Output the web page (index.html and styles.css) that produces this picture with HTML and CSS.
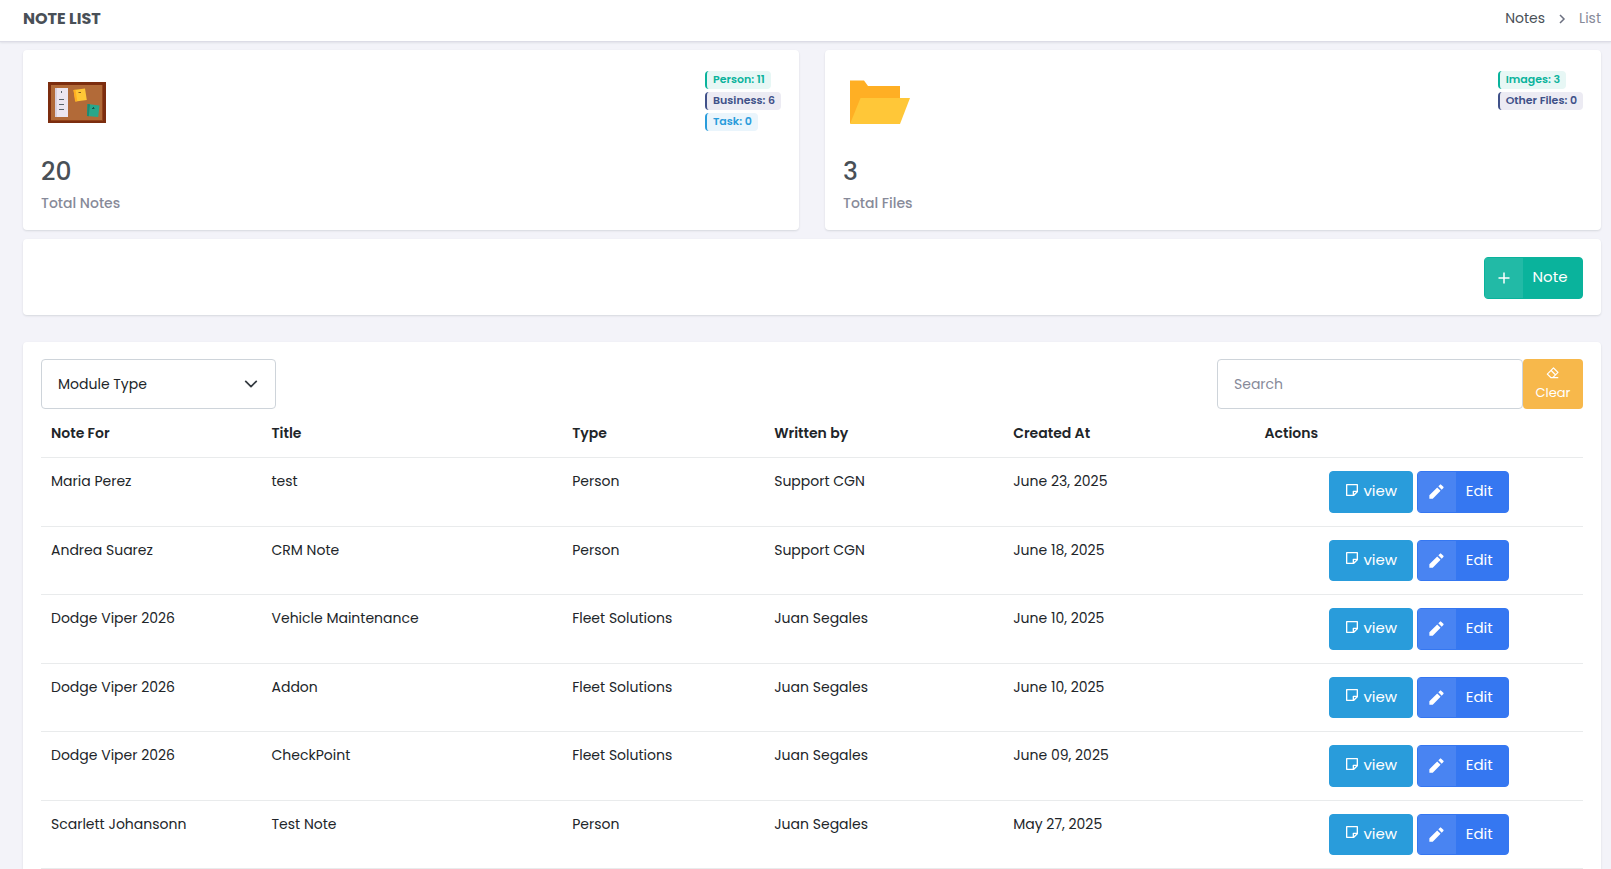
FILE: index.html
```html
<!DOCTYPE html>
<html lang="en">
<head>
<meta charset="utf-8">
<title>Note List</title>
<link rel="stylesheet" href="styles.css">
</head>
<body>
<svg class="sprite" aria-hidden="true">
  <symbol id="sticky" viewBox="0 0 24 24"><path fill="currentColor" d="M21 15l-6 5.996L4.002 21A.998.998 0 0 1 3 20.007V3.993C3 3.445 3.445 3 3.993 3h16.014c.548 0 .993.456.993 1.002V15zM19 5H5v14h8v-5a1 1 0 0 1 .883-.993L14 13l5-.001V5zm-.829 9.999L15 15v3.169l3.171-3.17z"/></symbol>
  <symbol id="pencil" viewBox="0 0 24 24"><path fill="currentColor" d="M12.9 6.858l4.242 4.243L7.242 21H3v-4.243l9.9-9.9zm1.414-1.414l2.121-2.122a1 1 0 0 1 1.414 0l2.829 2.829a1 1 0 0 1 0 1.414l-2.122 2.121-4.242-4.242z"/></symbol>
</svg>
<div class="page">
  <header class="topbar">
    <h1 class="topbar-title">NOTE LIST</h1>
    <nav class="breadcrumb" aria-label="Breadcrumb">
      <a class="breadcrumb-link" href="#">Notes</a>
      <svg class="breadcrumb-sep" viewBox="0 0 8 10"><path d="M2 1 6 5 2 9" fill="none" stroke="currentColor" stroke-width="1.500"/></svg>
      <span class="breadcrumb-current">List</span>
    </nav>
  </header>
  <main class="content">
    <section class="stats">
      <article class="card stat">
        <div class="stat-top">
          <svg class="stat-icon" viewBox="0 0 64 64">
            <path fill="#7c2d0f" d="M3 12h58v41H3z"/>
            <path fill="#934219" d="M6 15h52v36H6z"/>
            <path fill="#b26a38" d="M6 15h51v35H6z"/>
            <path fill="#d9d0dc" d="M10 18h2v29h-2z"/>
            <path fill="#ece6f0" d="M12 18h11v29H12z"/>
            <path stroke="#5a646b" stroke-width="1" d="M16.500 21v2M14 29.500h5M14 34.500h5M14 39.500h5"/>
            <path fill="#ffc736" d="M28.500 20 40 18.500 41.800 30 30.500 31.500z"/>
            <path fill="#ffae20" d="M28.500 20l2-.3 1.800 11.500-2.200.3z"/>
            <path stroke="#8a5a1c" d="M33.500 22.500h2.500"/>
            <path fill="#2aa78b" d="M42.500 34 54.500 35.500 53.200 47 42 46z"/>
            <path fill="#208871" d="M42.500 34l2.500.3L43.800 46.200 42 46z"/>
            <path stroke="#17594c" d="M47 38.500h2.500M48.500 37v2"/>
          </svg>
          <div class="badges">
            <span class="badge badge-success">Person: 11</span>
            <span class="badge badge-primary">Business: 6</span>
            <span class="badge badge-info">Task: 0</span>
          </div>
        </div>
        <strong class="stat-value">20</strong>
        <span class="stat-label">Total Notes</span>
      </article>
      <article class="card stat">
        <div class="stat-top">
          <svg class="stat-icon" viewBox="0 0 64 64">
            <path fill="#ffaf24" d="M3 10.500h14l4 5.500h32v37H3z"/>
            <path fill="#ffc738" d="M13.500 28H63L53 54H3z"/>
          </svg>
          <div class="badges">
            <span class="badge badge-success">Images: 3</span>
            <span class="badge badge-primary">Other Files: 0</span>
          </div>
        </div>
        <strong class="stat-value">3</strong>
        <span class="stat-label">Total Files</span>
      </article>
    </section>

    <section class="card toolbar">
      <button class="btn btn-split btn-success" type="button">
        <span class="btn-icon"><svg class="icon-plus" viewBox="0 0 16 16"><path d="M8 2.500v11M2.500 8h11" stroke="currentColor" stroke-width="1.500"/></svg></span>
        <span class="btn-text">Note</span>
      </button>
    </section>

    <section class="card list">
      <div class="filters">
        <div class="select-wrap">
          <select class="field select" aria-label="Module Type"><option>Module Type</option></select>
          <svg class="select-arrow" viewBox="0 0 16 16"><path d="M2 5l6 6 6-6" fill="none" stroke="currentColor" stroke-width="2" stroke-linecap="round" stroke-linejoin="round"/></svg>
        </div>
        <div class="search">
          <input class="field search-input" type="text" placeholder="Search" aria-label="Search">
          <button class="btn-clear" type="button">
            <svg class="icon-clear" viewBox="0 0 24 24"><path fill="currentColor" d="M8.586 8.858l-4.950 4.950 5.194 5.194H10V19h1.172l3.778-3.778-6.364-6.364zM10 7.444l6.364 6.364 2.828-2.829-6.364-6.364L10 7.444zM14 19h7v2h-9l-3.998.002-6.487-6.487a1 1 0 0 1 0-1.414L12.120 2.494a1 1 0 0 1 1.415 0l7.778 7.778a1 1 0 0 1 0 1.414L14 19z"/></svg>
            <span>Clear</span>
          </button>
        </div>
      </div>
      <table class="notes">
        <colgroup><col class="c-for"><col class="c-title"><col class="c-type"><col class="c-by"><col class="c-date"><col></colgroup>
        <thead>
          <tr><th>Note For</th><th>Title</th><th>Type</th><th>Written by</th><th>Created At</th><th>Actions</th></tr>
        </thead>
        <tbody>
          <tr><td>Maria Perez</td><td>test</td><td>Person</td><td>Support CGN</td><td>June 23, 2025</td><td><div class="actions"><button class="btn btn-view" type="button"><svg class="icon-note"><use href="#sticky"/></svg>view</button><button class="btn btn-split btn-edit" type="button"><span class="btn-icon"><svg class="icon-pencil"><use href="#pencil"/></svg></span><span class="btn-text">Edit</span></button></div></td></tr>
          <tr><td>Andrea Suarez</td><td>CRM Note</td><td>Person</td><td>Support CGN</td><td>June 18, 2025</td><td><div class="actions"><button class="btn btn-view" type="button"><svg class="icon-note"><use href="#sticky"/></svg>view</button><button class="btn btn-split btn-edit" type="button"><span class="btn-icon"><svg class="icon-pencil"><use href="#pencil"/></svg></span><span class="btn-text">Edit</span></button></div></td></tr>
          <tr><td>Dodge Viper 2026</td><td>Vehicle Maintenance</td><td>Fleet Solutions</td><td>Juan Segales</td><td>June 10, 2025</td><td><div class="actions"><button class="btn btn-view" type="button"><svg class="icon-note"><use href="#sticky"/></svg>view</button><button class="btn btn-split btn-edit" type="button"><span class="btn-icon"><svg class="icon-pencil"><use href="#pencil"/></svg></span><span class="btn-text">Edit</span></button></div></td></tr>
          <tr><td>Dodge Viper 2026</td><td>Addon</td><td>Fleet Solutions</td><td>Juan Segales</td><td>June 10, 2025</td><td><div class="actions"><button class="btn btn-view" type="button"><svg class="icon-note"><use href="#sticky"/></svg>view</button><button class="btn btn-split btn-edit" type="button"><span class="btn-icon"><svg class="icon-pencil"><use href="#pencil"/></svg></span><span class="btn-text">Edit</span></button></div></td></tr>
          <tr><td>Dodge Viper 2026</td><td>CheckPoint</td><td>Fleet Solutions</td><td>Juan Segales</td><td>June 09, 2025</td><td><div class="actions"><button class="btn btn-view" type="button"><svg class="icon-note"><use href="#sticky"/></svg>view</button><button class="btn btn-split btn-edit" type="button"><span class="btn-icon"><svg class="icon-pencil"><use href="#pencil"/></svg></span><span class="btn-text">Edit</span></button></div></td></tr>
          <tr><td>Scarlett Johansonn</td><td>Test Note</td><td>Person</td><td>Juan Segales</td><td>May 27, 2025</td><td><div class="actions"><button class="btn btn-view" type="button"><svg class="icon-note"><use href="#sticky"/></svg>view</button><button class="btn btn-split btn-edit" type="button"><span class="btn-icon"><svg class="icon-pencil"><use href="#pencil"/></svg></span><span class="btn-text">Edit</span></button></div></td></tr>
        </tbody>
      </table>
    </section>
  </main>
</div>
</body>
</html>
```

FILE: styles.css
```css
* { box-sizing: border-box; }

body {
  margin: 0;
  background: #f3f3f9;
  color: #212529;
  font-family: Poppins, Inter, "Open Sans", sans-serif;
  font-size: 14px;
  line-height: 1.5;
}

button, input, select { font: inherit; }

.sprite { display: none; }

.page {
  height: 100vh;
  overflow-y: auto;
  scrollbar-width: none;
}

.topbar {
  display: flex;
  align-items: center;
  justify-content: space-between;
  height: 42px;
  padding: 0 10px 4px 23px;
  background: #fff;
  border-bottom: 1px solid #dcdce6;
  box-shadow: 0 1px 2px rgba(56, 65, 74, 0.1);
}

.topbar-title {
  margin: 0;
  color: #495057;
  font-size: 16px;
  font-weight: 700;
}

.breadcrumb { display: flex; align-items: center; }
.breadcrumb-link { color: #495057; text-decoration: none; }
.breadcrumb-sep { width: 8px; height: 10px; margin: 0 13px; color: #6c7080; }
.breadcrumb-current { color: #878a99; }

.content { padding: 8px 10px 24px 23px; }

.card {
  background: #fff;
  border-radius: 4px;
  box-shadow: 0 1px 2px rgba(56, 65, 74, 0.15);
}

.stats {
  display: grid;
  grid-template-columns: 1fr 1fr;
  gap: 26px;
  margin-bottom: 9px;
}

.stat {
  display: flex;
  flex-direction: column;
  padding: 18px 18px 16px;
}

.stat-top {
  display: flex;
  justify-content: space-between;
  align-items: flex-start;
  height: 85px;
}

.stat-icon { width: 64px; height: 64px; margin: 2px 0 0 4px; overflow: visible; }

.badges {
  display: flex;
  flex-direction: column;
  align-items: flex-start;
  gap: 3px;
  padding-top: 3px;
}

.badge {
  padding: 0 6px 2px;
  border-left: 2px solid;
  border-radius: 4px;
  font-size: 11px;
  font-weight: 600;
  line-height: 16px;
}

.badge-success { color: #0ab39c; background: #e7f7f5; }
.badge-primary { color: #405189; background: #ecebf3; }
.badge-info { color: #299cdb; background: #eaf5fc; }

.stat-value {
  color: #495057;
  font-size: 25px;
  font-weight: 500;
  line-height: 38px;
}

.stat-label { margin-top: 2px; color: #878a99; font-weight: 500; }

.toolbar {
  display: flex;
  align-items: flex-start;
  justify-content: flex-end;
  height: 76px;
  padding: 18px 18px 0;
  margin-bottom: 27px;
}

.btn {
  display: inline-flex;
  align-items: center;
  justify-content: center;
  padding: 8px 17px 9px;
  border: 1px solid transparent;
  border-radius: 4px;
  color: #fff;
  font-size: 15px;
  font-weight: 400;
  line-height: 1.5;
}

.btn-split { align-items: stretch; padding: 0; }
.btn-icon {
  display: flex;
  align-items: center;
  justify-content: center;
  width: 38px;
  background: rgba(255, 255, 255, 0.1);
}
.btn-text { flex: 1; padding: 8px 14px 9px 9px; text-align: center; }

.btn-success { min-width: 99px; background: #0ab39c; border-color: #0ab39c; }
.btn-view { width: 84px; padding: 8px 0 9px; background: #299cdb; border-color: #299cdb; }
.btn-edit { width: 92px; background: #3577f1; border-color: #3577f1; }

.icon-plus { width: 16px; height: 16px; }
.icon-note { width: 16px; height: 16px; margin: 0 3px 3px 0; }
.icon-pencil { width: 19px; height: 19px; }

.list { padding: 17px 18px; }

.filters { display: flex; justify-content: space-between; }

.field {
  width: 100%;
  height: 50px;
  padding: 0 16px;
  border: 1px solid #ced4da;
  border-radius: 4px;
  background: #fff;
  color: #212529;
}

.select-wrap { position: relative; width: 235px; }
.select { appearance: none; }
.select-arrow {
  position: absolute;
  top: 18px;
  right: 18px;
  width: 14px;
  height: 14px;
  color: #343a40;
  pointer-events: none;
}

.search { display: flex; width: 366px; }
.search-input { flex: 1; min-width: 0; }
.search-input::placeholder { color: #878a99; opacity: 1; }

.btn-clear {
  display: flex;
  flex-direction: column;
  align-items: center;
  justify-content: center;
  gap: 3px;
  width: 60px;
  padding: 1px 0 0;
  border: 0;
  border-radius: 4px;
  background: #f7b84b;
  color: #fff;
  font-size: 13px;
}
.icon-clear { width: 14px; height: 14px; }

.notes { width: 100%; border-spacing: 0; table-layout: fixed; }
.c-for { width: 14.3%; }
.c-title { width: 19.5%; }
.c-type { width: 13.1%; }
.c-by { width: 15.5%; }
.c-date { width: 16.3%; }

.notes th,
.notes td {
  padding: 13px 10px;
  border-bottom: 1px solid #e9ebec;
  text-align: left;
  vertical-align: top;
}
.notes th { font-weight: 600; padding-top: 14px; }

.actions { display: flex; justify-content: center; gap: 4px; }
```
